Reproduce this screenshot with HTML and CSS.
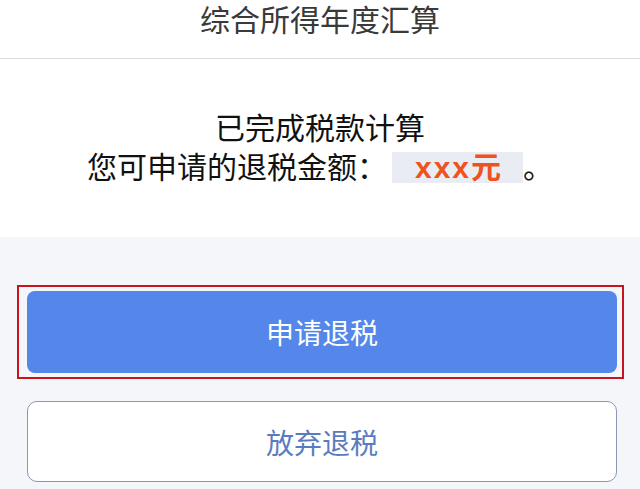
FILE: index.html
```html
<!DOCTYPE html>
<html lang="zh-CN">
<head>
    <meta charset="UTF-8">
    <meta name="viewport" content="width=device-width, initial-scale=1.0">
    <title>综合所得年度汇算</title>
    <link rel="stylesheet" href="styles.css">
</head>
<body>
    <div class="page">
        <header class="nav-bar">
            <h1 class="nav-title">综合所得年度汇算</h1>
        </header>

        <section class="result">
            <p class="result-line">已完成税款计算</p>
            <p class="result-line">您可申请的退税金额：<span class="amount">xxx元</span>。</p>
        </section>

        <section class="actions">
            <div class="highlight-frame">
                <button class="btn btn-primary">申请退税</button>
            </div>
            <button class="btn btn-outline">放弃退税</button>
        </section>
    </div>
</body>
</html>
```

FILE: styles.css
```css
* {
    margin: 0;
    padding: 0;
    box-sizing: border-box;
}

body {
    font-family: "Noto Sans CJK SC", "Noto Sans", sans-serif;
    background-color: #f4f6f9;
    width: 640px;
    height: 489px;
    overflow: hidden;
}

.page {
    display: flex;
    flex-direction: column;
    height: 100%;
}

.nav-bar {
    height: 59px;
    background-color: #fff;
    border-bottom: 1px solid #dcdcdc;
}

.nav-title {
    font-size: 30px;
    font-weight: 400;
    line-height: 37px;
    text-align: center;
    color: #3a3a3a;
}

.result {
    background-color: #fff;
    padding: 48px 0 52px;
    text-align: center;
}

.result-line {
    font-size: 30px;
    line-height: 39px;
    color: #111;
}

.amount {
    display: inline-block;
    background-color: #e9ecf3;
    color: #ee5220;
    font-weight: 700;
    font-family: "Liberation Sans", "Noto Sans CJK SC", sans-serif;
    letter-spacing: 2px;
    line-height: 31px;
    padding: 0 20px 0 23px;
    margin-left: 5px;
}

.actions {
    flex: 1;
    padding-top: 48px;
    display: flex;
    flex-direction: column;
    gap: 22px;
}

.highlight-frame {
    margin-left: 17px;
    width: 607px;
    border: 2px solid #c8141e;
    padding: 4px 5px 4px 8px;
}

.btn {
    display: block;
    width: 100%;
    font-family: inherit;
    font-size: 28px;
    border-radius: 8px;
    cursor: pointer;
}

.btn-primary {
    height: 82px;
    border: none;
    background-color: #5487e9;
    color: #fff;
}

.btn-outline {
    margin-left: 27px;
    width: 590px;
    height: 81px;
    background-color: #fff;
    border: 1.5px solid #8a98b3;
    border-radius: 10px;
    color: #5a7cbf;
}
```
